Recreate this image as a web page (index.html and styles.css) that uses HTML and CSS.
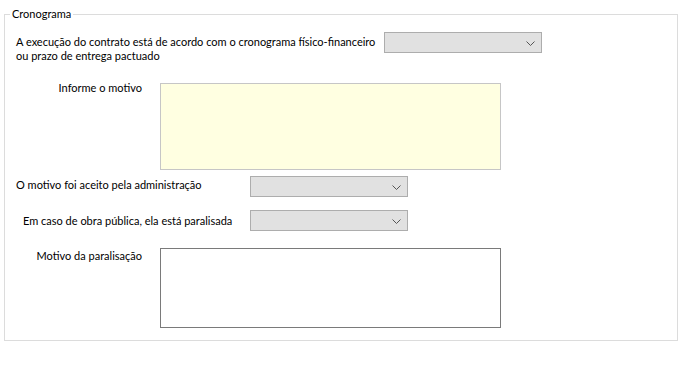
FILE: index.html
```html
<!DOCTYPE html>
<html>
<head>
  <meta charset="UTF-8">
  <title>Cronograma</title>
  <link rel="stylesheet" href="styles.css">
</head>
<body>

  <fieldset class="group">
    <legend>Cronograma</legend>

    <div class="row row-exec">
      <label class="lbl lbl-exec">A execução do contrato está de acordo com o cronograma físico-financeiro<br>ou prazo de entrega pactuado</label>
      <div class="combo">
        <svg class="chev" width="9" height="5" viewBox="0 0 9 5"><path d="M0.5 0.5 L4.5 4.5 L8.5 0.5" fill="none" stroke="#555" stroke-width="1"/></svg>
      </div>
    </div>

    <div class="row row-motivo">
      <label class="lbl lbl-right">Informe o motivo</label>
      <div class="memo memo-yellow"></div>
    </div>

    <div class="row row-aceito">
      <label class="lbl lbl-aceito">O motivo foi aceito pela administração</label>
      <div class="combo">
        <svg class="chev" width="9" height="5" viewBox="0 0 9 5"><path d="M0.5 0.5 L4.5 4.5 L8.5 0.5" fill="none" stroke="#555" stroke-width="1"/></svg>
      </div>
    </div>

    <div class="row row-obra">
      <label class="lbl lbl-obra">Em caso de obra pública, ela está paralisada</label>
      <div class="combo">
        <svg class="chev" width="9" height="5" viewBox="0 0 9 5"><path d="M0.5 0.5 L4.5 4.5 L8.5 0.5" fill="none" stroke="#555" stroke-width="1"/></svg>
      </div>
    </div>

    <div class="row row-paral">
      <label class="lbl lbl-right">Motivo da paralisação</label>
      <div class="memo memo-white"></div>
    </div>
  </fieldset>

</body>
</html>
```

FILE: styles.css
```css
body { margin: 0; background: #fff; font-family: "Lato", "Noto Sans", sans-serif; font-size: 11px; color: #000; }

.group { margin: 6px 0 0 4px; width: 674px; box-sizing: border-box; padding: 0 0 12px 0; border: 1px solid #dcdcdc; }
.group legend { margin-left: 5px; padding: 0 2px; line-height: 16px; }

.row { display: flex; align-items: flex-start; }
.lbl { line-height: 14px; white-space: nowrap; }

.row-exec { margin-top: 10px; padding-left: 11px; }
.lbl-exec { width: 368px; margin-top: 3px; }

.row-motivo { margin-top: 20px; }
.row-paral { margin-top: 17px; }
.lbl-right { width: 137px; text-align: right; margin-right: 18px; margin-top: -2px; }
.row-paral .lbl-right { margin-top: 1px; }

.row-aceito { margin-top: 6px; padding-left: 11px; align-items: center; }
.lbl-aceito { width: 234px; margin-top: -3px; }

.row-obra { margin-top: 13px; padding-left: 18px; align-items: center; }
.lbl-obra { width: 227px; }

.combo { width: 158px; height: 21px; box-sizing: border-box; border: 1px solid #adadad; background: #e1e1e1; position: relative; }
.chev { position: absolute; right: 6px; top: 8px; }

.memo { width: 341px; box-sizing: border-box; }
.memo-yellow { height: 87px; background: #ffffe1; border: 1px solid #c6c6c6; }
.memo-white { height: 80px; background: #fff; border: 1px solid #7a7a7a; }
```
